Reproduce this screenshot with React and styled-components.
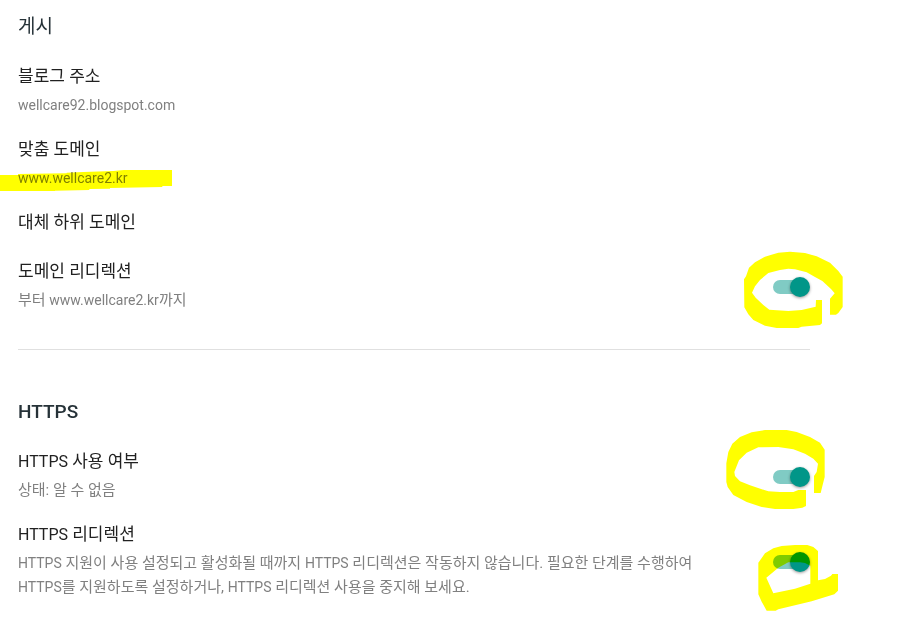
import React, { useId, useState } from "react";
import styled, { createGlobalStyle } from "styled-components";

const GlobalStyle = createGlobalStyle`
  *, *::before, *::after { box-sizing: border-box; }
  body {
    margin: 0;
    background: #fff;
    color: #212121;
    font-family: Roboto, "Noto Sans CJK KR", sans-serif;
  }
`;

const Page = styled.main`
  padding: 13px 92px 0 18px;
  overflow: hidden;
`;

const Section = styled.section`
  & + & {
    margin-top: 37px;
    padding-top: 48px;
    border-top: 1px solid #e0e0e0;
  }
`;

const Heading = styled.h2`
  margin: 0 0 23px;
  font-size: 19px;
  font-weight: ${(p) => (p.$strong ? 500 : 400)};
  line-height: 28px;
  color: #263238;
`;

const Row = styled.div`
  display: flex;
  align-items: center;
  justify-content: space-between;
  margin-bottom: 20px;
`;

const RowText = styled.div`
  min-width: 0;
  max-width: 700px;
`;

const Latin = styled.span`
  font-size: 16px;
  line-height: 1;
`;

const Title = styled.div`
  display: block;
  margin-bottom: 5px;
  font-size: 17px;
  line-height: 24px;
`;

const Description = styled.p`
  position: relative;
  margin: 0;
  font-size: 15px;
  line-height: 24px;
  word-break: keep-all;
  color: #808080;

  ${Latin} {
    font-size: 14px;
  }
`;

const SwitchBox = styled.span`
  position: relative;
  display: flex;
  flex: none;
  margin-top: 3px;
`;

const SwitchInput = styled.input`
  appearance: none;
  display: grid;
  align-items: center;
  width: 37px;
  height: 20px;
  margin: 0;
  cursor: pointer;

  &::before,
  &::after {
    content: "";
    grid-area: 1 / 1;
  }
  &::before {
    width: 36px;
    height: 14px;
    border-radius: 7px;
    background: #bdbdbd;
  }
  &::after {
    width: 20px;
    height: 20px;
    border-radius: 50%;
    background: #fafafa;
    box-shadow: 0 1px 3px rgba(0, 0, 0, 0.4);
  }
  &:checked::before {
    background: #80cbc4;
  }
  &:checked::after {
    justify-self: end;
    background: #009688;
  }
`;

const Marker = styled.svg`
  position: absolute;
  left: ${(p) => p.$x}px;
  top: ${(p) => p.$y}px;
  fill: #ff0;
  fill-rule: evenodd;
  mix-blend-mode: multiply;
  pointer-events: none;
`;

const marks = {
  stripe: {
    x: -18, y: 0, w: 172, h: 26, box: "0 93 516 78",
    d: "M0 120H54V117L200 115V113L250 111L340 108L372 105H516V153H487V156L330 159V161L268 162V165L165 167V168H0Z",
  },
  domain: {
    x: -38, y: -32, w: 120, h: 90, box: "0 0 360 270",
    d: "M27 103L33 94L42 68L60 52L90 35L130 23L165 20L210 24L245 34L285 53L310 78L323 95V186L310 204L303 209H285V161L299 145L288 132L275 120L262 108L240 96L215 82L180 73L160 71L135 75L100 84L75 105L60 124L51 143L62 158L85 180L103 194L160 198L200 195L242 185L243 165H261V235L255 240L200 245L190 249H125L90 242L55 225L40 208L28 187Z",
  },
  https: {
    x: -58, y: -45, w: 120, h: 95, box: "0 0 360 285",
    d: "M34 124L40 90L52 65L75 45L110 31L150 24H215L245 30L285 45L315 62L329 83V165L322 193L317 213H297V162L305 150L309 125L295 110L270 95L235 82L190 75L130 76L95 92L72 115L58 150L60 162L75 178L105 190L160 208L195 210H235L250 204H273V252L262 257L235 261H180L140 255L95 240L55 219L38 195L34 180Z",
  },
  redirect: {
    x: -28, y: -17, w: 105, h: 85, box: "0 0 315 255",
    d: "M40 83L60 55L85 40L110 33L150 30H187L205 36L219 48V136L240 132L258 122L262 117H279V167L268 178L200 199L100 223L92 227H65L50 200L40 178ZM64 128L85 175L150 161L196 146V92L180 84L165 82H130L100 98Z",
  },
};

function Highlight({ mark }) {
  const m = marks[mark];
  return (
    <Marker $x={m.x} $y={m.y} width={m.w} height={m.h} viewBox={m.box} aria-hidden="true">
      <path d={m.d} />
    </Marker>
  );
}

function Setting({ title, children, mark }) {
  return (
    <Row>
      <RowText>
        <Title>{title}</Title>
        {children && (
          <Description>
            {children}
            {mark && <Highlight mark={mark} />}
          </Description>
        )}
      </RowText>
    </Row>
  );
}

function SwitchSetting({ title, children, mark }) {
  const id = useId();
  const [on, setOn] = useState(true);
  return (
    <Row>
      <RowText>
        <Title as="label" htmlFor={id}>{title}</Title>
        <Description>{children}</Description>
      </RowText>
      <SwitchBox>
        <SwitchInput
          id={id}
          type="checkbox"
          role="switch"
          checked={on}
          onChange={(e) => setOn(e.target.checked)}
        />
        <Highlight mark={mark} />
      </SwitchBox>
    </Row>
  );
}

export default function App() {
  return (
    <>
      <GlobalStyle />
      <Page>
        <Section>
          <Heading>게시</Heading>
          <Setting title="블로그 주소"><Latin>wellcare92.blogspot.com</Latin></Setting>
          <Setting title="맞춤 도메인" mark="stripe"><Latin>www.wellcare2.kr</Latin></Setting>
          <Setting title="대체 하위 도메인" />
          <SwitchSetting title="도메인 리디렉션" mark="domain">
            부터 <Latin>www.wellcare2.kr</Latin>까지
          </SwitchSetting>
        </Section>
        <Section>
          <Heading $strong>HTTPS</Heading>
          <SwitchSetting title={<><Latin>HTTPS</Latin> 사용 여부</>} mark="https">
            상태: 알 수 없음
          </SwitchSetting>
          <SwitchSetting title={<><Latin>HTTPS</Latin> 리디렉션</>} mark="redirect">
            <Latin>HTTPS</Latin> 지원이 사용 설정되고 활성화될 때까지 <Latin>HTTPS</Latin> 리디렉션은
            작동하지 않습니다. 필요한 단계를 수행하여 <Latin>HTTPS</Latin>를 지원하도록 설정하거나,{" "}
            <Latin>HTTPS</Latin> 리디렉션 사용을 중지해 보세요.
          </SwitchSetting>
        </Section>
      </Page>
    </>
  );
}
